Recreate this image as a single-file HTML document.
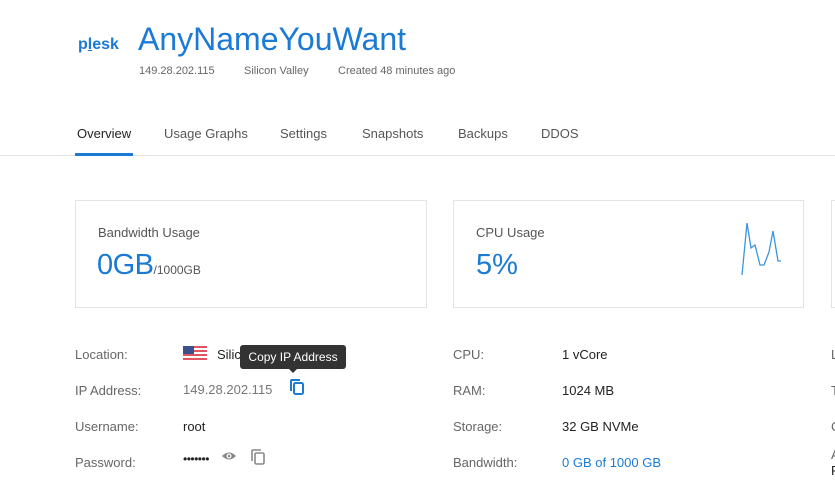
<!DOCTYPE html>
<html><head><meta charset="utf-8"><style>
body{margin:0;width:835px;height:496px;background:#fff;font-family:"Liberation Sans",Arial,sans-serif;position:relative;overflow:hidden;color:#333}
.a{position:absolute;white-space:nowrap}
.lbl{font-size:13px;color:#666}
.val{font-size:13px;color:#222}
.card{position:absolute;border:1px solid #e3e3e3;background:#fff;box-sizing:border-box}
</style></head><body>
<div class="a" style="left:78px;top:36px;font-size:16px;color:#1a7ad4;font-weight:bold">p<span style="text-decoration:underline">l</span>esk</div>
<div class="a" style="left:138px;top:21px;font-size:32px;color:#1a7ad4">AnyNameYouWant</div>
<div class="a" style="left:139px;top:65px;font-size:11px;color:#666">149.28.202.115</div>
<div class="a" style="left:244px;top:65px;font-size:11px;color:#666">Silicon Valley</div>
<div class="a" style="left:338px;top:65px;font-size:11px;color:#666">Created 48 minutes ago</div>

<div class="a" style="left:77px;top:126px;font-size:13px;color:#222">Overview</div>
<div class="a" style="left:164px;top:126px;font-size:13px;color:#555">Usage Graphs</div>
<div class="a" style="left:280px;top:126px;font-size:13px;color:#555">Settings</div>
<div class="a" style="left:362px;top:126px;font-size:13px;color:#555">Snapshots</div>
<div class="a" style="left:458px;top:126px;font-size:13px;color:#555">Backups</div>
<div class="a" style="left:541px;top:126px;font-size:13px;color:#555">DDOS</div>
<div class="a" style="left:0;top:155px;width:835px;height:1px;background:#e3e3e3"></div>
<div class="a" style="left:75px;top:153px;width:58px;height:3px;background:#1a7ad4"></div>

<div class="card" style="left:75px;top:200px;width:352px;height:108px"></div>
<div class="a" style="left:98px;top:225px;font-size:13px;color:#555">Bandwidth Usage</div>
<div class="a" style="left:97px;top:249px;font-size:29px;color:#1a7ad4;letter-spacing:-0.5px">0GB<span style="font-size:12px;color:#555;letter-spacing:0">/1000GB</span></div>
<div class="card" style="left:453px;top:200px;width:351px;height:108px"></div>
<div class="a" style="left:476px;top:225px;font-size:13px;color:#555">CPU Usage</div>
<div class="a" style="left:476px;top:249px;font-size:29px;color:#1a7ad4">5%</div>
<svg class="a" style="left:0;top:0" width="835" height="496"><polyline fill="none" stroke="#3a94e0" stroke-width="1.3" points="742,275 747,223 751,248 755,245 760,265 764,265 769,252 773,231 778,261 781,261"/></svg>
<div class="card" style="left:831px;top:200px;width:20px;height:108px"></div>

<div class="a lbl" style="left:75px;top:347px">Location:</div>
<div class="a" style="left:183px;top:346px;width:24px;height:14px;background:repeating-linear-gradient(#e05563 0 2px,#fff 2px 4px)"><div style="width:11px;height:8px;background:#3c4f8f"></div></div>
<div class="a val" style="left:217px;top:347px">Silic</div>
<div class="a" style="left:240px;top:345px;width:106px;height:24px;background:#333;border-radius:3px;color:#fff;font-size:12px;line-height:24px;text-align:center">Copy IP Address</div>
<div class="a" style="left:288px;top:368px;width:0;height:0;border-left:5px solid transparent;border-right:5px solid transparent;border-top:5px solid #333"></div>
<div class="a lbl" style="left:75px;top:383px">IP Address:</div>
<div class="a" style="left:183px;top:382px;font-size:13px;color:#777">149.28.202.115</div>
<svg class="a" style="left:289px;top:378px" width="17" height="18"><path d="M2 13V3a1 1 0 0 1 1-1h8" stroke="#1a7ad4" stroke-width="2" fill="none"/><rect x="5" y="5" width="9" height="11" rx="1.5" stroke="#1a7ad4" stroke-width="2" fill="none"/></svg>
<div class="a lbl" style="left:75px;top:419px">Username:</div>
<div class="a val" style="left:183px;top:419px">root</div>
<div class="a lbl" style="left:75px;top:455px">Password:</div>
<div class="a val" style="left:183px;top:452px;font-size:12px;letter-spacing:-0.5px">•••••••</div>
<svg class="a" style="left:221px;top:450px" width="16" height="12"><path d="M1 6Q8 -1 15 6Q8 13 1 6Z" fill="#888"/><circle cx="8" cy="6" r="2.5" fill="#fff"/><circle cx="8" cy="6" r="1.3" fill="#888"/></svg>
<svg class="a" style="left:250px;top:448px" width="17" height="18"><path d="M2 13V3a1 1 0 0 1 1-1h8" stroke="#888" stroke-width="1.6" fill="none"/><rect x="5" y="5" width="9" height="11" rx="1.5" stroke="#888" stroke-width="1.6" fill="none"/></svg>

<div class="a lbl" style="left:453px;top:347px">CPU:</div>
<div class="a val" style="left:562px;top:347px">1 vCore</div>
<div class="a lbl" style="left:453px;top:383px">RAM:</div>
<div class="a val" style="left:562px;top:383px">1024 MB</div>
<div class="a lbl" style="left:453px;top:419px">Storage:</div>
<div class="a val" style="left:562px;top:419px">32 GB NVMe</div>
<div class="a lbl" style="left:453px;top:455px">Bandwidth:</div>
<div class="a val" style="left:562px;top:455px;color:#1a7ad4">0 GB of 1000 GB</div>

<div class="a lbl" style="left:831px;top:347px">L</div>
<div class="a lbl" style="left:831px;top:383px">T</div>
<div class="a lbl" style="left:831px;top:419px">C</div>
<div class="a lbl" style="left:831px;top:447px">A</div>
<div class="a val" style="left:831px;top:463px">F</div>
</body></html>
